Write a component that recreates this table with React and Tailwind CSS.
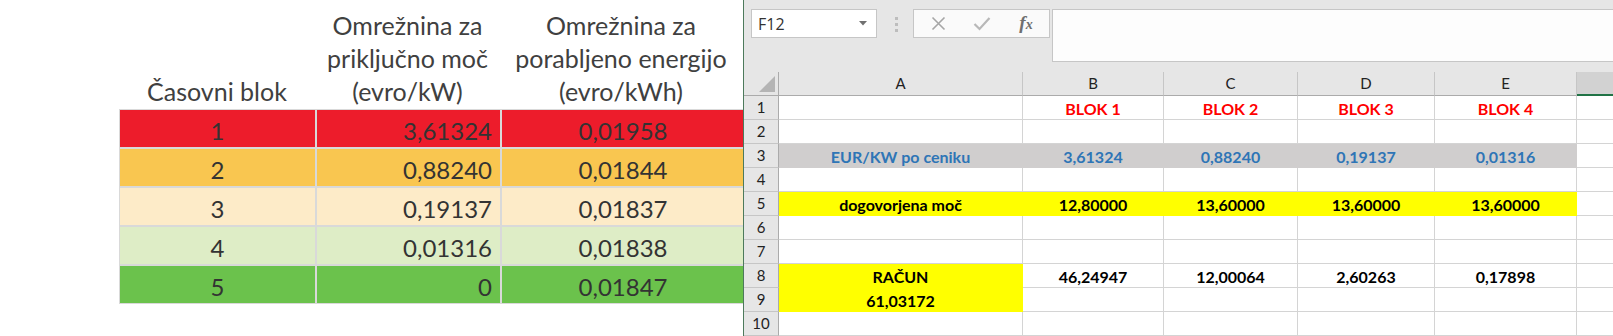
import React from 'react';

const leftRows = [
  { n: '1', a: '3,61324', b: '0,01958', bg: 'bg-[#ED1C2B]' },
  { n: '2', a: '0,88240', b: '0,01844', bg: 'bg-[#F9C650]' },
  { n: '3', a: '0,19137', b: '0,01837', bg: 'bg-[#FDEBC8]' },
  { n: '4', a: '0,01316', b: '0,01838', bg: 'bg-[#DEEDC6]' },
  { n: '5', a: '0', b: '0,01847', bg: 'bg-[#6BC24C]' },
];

const W = 'bg-white border-[#d4d4d4]';
const G = 'bg-[#d0cece] border-transparent text-[#2e75b6]';
const Y = 'bg-[#ffff00] border-transparent text-black';
const R = 'bg-white border-[#d4d4d4] text-[#ff0000]';
const K = 'bg-white border-[#d4d4d4] text-black';

const sheet = [
  [['', W], ['BLOK 1', R], ['BLOK 2', R], ['BLOK 3', R], ['BLOK 4', R]],
  [['', W], ['', W], ['', W], ['', W], ['', W]],
  [['EUR/KW po ceniku', G], ['3,61324', G], ['0,88240', G], ['0,19137', G], ['0,01316', G]],
  [['', W], ['', W], ['', W], ['', W], ['', W]],
  [['dogovorjena moč', Y], ['12,80000', Y], ['13,60000', Y], ['13,60000', Y], ['13,60000', Y]],
  [['', W], ['', W], ['', W], ['', W], ['', W]],
  [['', W], ['', W], ['', W], ['', W], ['', W]],
  [['RAČUN', Y], ['46,24947', K], ['12,00064', K], ['2,60263', K], ['0,17898', K]],
  [['61,03172', Y], ['', W], ['', W], ['', W], ['', W]],
  [['', W], ['', W], ['', W], ['', W], ['', W]],
];

function LeftPanel() {
  return (
    <div className="w-[743px] h-[336px] shrink-0 overflow-hidden bg-white pl-[119px] font-['Lato',sans-serif] text-[#333]">
      <div className="grid grid-cols-[196px_185px_242px] h-[109px] items-end text-[25px] leading-[33px] text-center pb-[1px] text-[#404040]">
        <div>Časovni blok</div>
        <div>Omrežnina za<br />priključno moč<br />(evro/kW)</div>
        <div className="whitespace-nowrap">Omrežnina za<br />porabljeno energijo<br />(evro/kWh)</div>
      </div>
      <div className="grid grid-cols-[195px_183px_242px] gap-[2px] bg-[#d9d9d9] p-[1px] w-[630px] text-[24px] leading-none">
        {leftRows.map((r) => (
          <React.Fragment key={r.n}>
            <div className={`${r.bg} h-[37px] flex items-center justify-center pt-[4px]`}>{r.n}</div>
            <div className={`${r.bg} h-[37px] flex items-center justify-end pr-[8px] pt-[4px]`}>{r.a}</div>
            <div className={`${r.bg} h-[37px] flex items-center justify-center pt-[4px]`}>{r.b}</div>
          </React.Fragment>
        ))}
      </div>
    </div>
  );
}

function Toolbar() {
  return (
    <div className="h-[75px] flex items-start pt-[9px] pl-[7px]">
      <div className="w-[126px] h-[29px] bg-white border border-[#c6c6c6] flex items-center justify-between pl-[6px] pr-[9px] font-['Open_Sans',sans-serif] text-[16px] text-[#333]">
        <span>F12</span>
        <svg width="8" height="5" viewBox="0 0 8 5"><polygon points="0,0 8,0 4,4.5" fill="#707070" /></svg>
      </div>
      <div className="ml-[18px] mt-[8px] flex flex-col gap-[3px]">
        <div className="w-[3px] h-[3px] bg-[#bdbdbd]" />
        <div className="w-[3px] h-[3px] bg-[#bdbdbd]" />
        <div className="w-[3px] h-[3px] bg-[#bdbdbd]" />
      </div>
      <div className="ml-[15px] w-[137px] h-[29px] bg-[#fafafa] border border-[#c6c6c6] flex items-center">
        <div className="w-[46px] flex justify-center pl-[2px]">
          <svg width="15" height="15" viewBox="0 0 15 15"><path d="M1.5 1.5 L13.5 13.5 M13.5 1.5 L1.5 13.5" stroke="#a6a6a6" strokeWidth="1.6" fill="none" /></svg>
        </div>
        <div className="w-[44px] flex justify-center">
          <svg width="18" height="15" viewBox="0 0 18 15"><path d="M1.5 8 L6.5 13 L16.5 2" stroke="#b8b8b8" strokeWidth="2.2" fill="none" /></svg>
        </div>
        <div className="w-[44px] flex justify-center items-baseline font-['Liberation_Serif',serif] italic text-[#6f6f6f] font-bold">
          <span className="text-[19px]">f</span><span className="text-[14px]">x</span>
        </div>
      </div>
      <div className="ml-[2px] flex-1 h-[53px] bg-[#fdfdfd] border-l border-t border-b border-[#c6c6c6]" />
    </div>
  );
}

function Sheet() {
  const letters = ['A', 'B', 'C', 'D', 'E'];
  return (
    <div className="grid grid-cols-[35px_244px_141px_134px_137px_142px_1fr] grid-rows-[24px_repeat(10,24px)] font-['Lato',sans-serif]">
      <div className="bg-[#e6e6e6] border-r border-b border-r-[#ababab] border-b-[#ababab] relative">
        <svg className="absolute right-[3px] bottom-[3px]" width="16" height="16" viewBox="0 0 16 16"><polygon points="16,0 16,16 0,16" fill="#b4b4b4" /></svg>
      </div>
      {letters.map((l) => (
        <div key={l} className="bg-[#e6e6e6] border-r border-b border-r-[#c6c6c6] border-b-[#ababab] flex items-center justify-center text-[15px] text-[#222]">{l}</div>
      ))}
      <div className="bg-[#d2d2d2] border-b-2 border-b-[#217346]" />
      {sheet.map((row, i) => (
        <React.Fragment key={i}>
          <div className="bg-[#e6e6e6] border-r border-b border-r-[#ababab] border-b-[#c6c6c6] flex items-center justify-center text-[15px] text-[#222]">{i + 1}</div>
          {row.map(([t, c], j) => {
            const noBottom = i === 7 && j === 0;
            return (
              <div
                key={j}
                className={`${c} border-r ${noBottom ? 'border-b border-b-[#ffff00]' : 'border-b'} flex items-center justify-center pt-[2px] text-[16px] font-bold whitespace-nowrap`}
              >
                {t}
              </div>
            );
          })}
          <div className="bg-white border-b border-[#d4d4d4]" />
        </React.Fragment>
      ))}
    </div>
  );
}

export default function App() {
  return (
    <div className="w-[1613px] h-[336px] flex overflow-hidden bg-white">
      <LeftPanel />
      <div className="w-[1px] h-[336px] bg-[#4d7a5c] shrink-0" />
      <div className="flex-1 h-[336px] overflow-hidden bg-[#e6e6e6] flex flex-col">
        <Toolbar />
        <Sheet />
      </div>
    </div>
  );
}
